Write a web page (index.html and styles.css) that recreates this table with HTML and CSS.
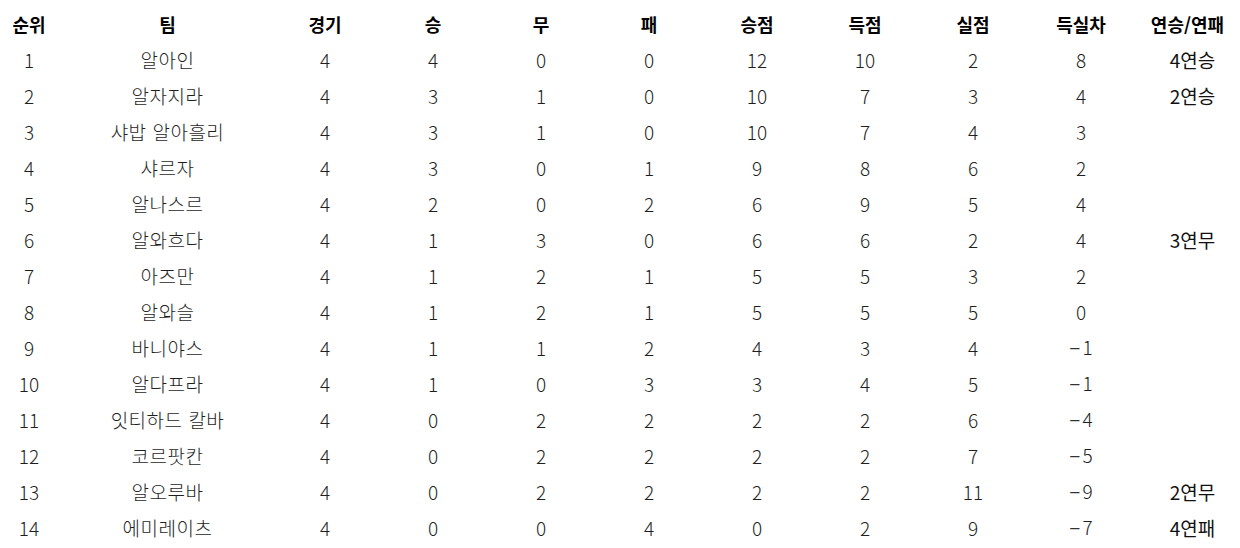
FILE: index.html
```html
<!DOCTYPE html>
<html lang="ko">
<head>
<meta charset="utf-8">
<title>순위표</title>
<link rel="stylesheet" href="styles.css">
</head>
<body>
<table class="standings">
  <colgroup>
    <col class="c-rank"><col class="c-team"><col class="c-num"><col class="c-num"><col class="c-num"><col class="c-num"><col class="c-num"><col class="c-num"><col class="c-num"><col class="c-num"><col class="c-streak">
  </colgroup>
  <thead>
    <tr><th>순위</th><th class="team">팀</th><th>경기</th><th>승</th><th>무</th><th>패</th><th>승점</th><th>득점</th><th>실점</th><th>득실차</th><th>연승/연패</th></tr>
  </thead>
  <tbody>
    <tr><td>1</td><td class="team">알아인</td><td>4</td><td>4</td><td>0</td><td>0</td><td>12</td><td>10</td><td>2</td><td>8</td><td class="streak">4연승</td></tr>
    <tr><td>2</td><td class="team">알자지라</td><td>4</td><td>3</td><td>1</td><td>0</td><td>10</td><td>7</td><td>3</td><td>4</td><td class="streak">2연승</td></tr>
    <tr><td>3</td><td class="team">샤밥 알아흘리</td><td>4</td><td>3</td><td>1</td><td>0</td><td>10</td><td>7</td><td>4</td><td>3</td><td class="streak"></td></tr>
    <tr><td>4</td><td class="team">샤르자</td><td>4</td><td>3</td><td>0</td><td>1</td><td>9</td><td>8</td><td>6</td><td>2</td><td class="streak"></td></tr>
    <tr><td>5</td><td class="team">알나스르</td><td>4</td><td>2</td><td>0</td><td>2</td><td>6</td><td>9</td><td>5</td><td>4</td><td class="streak"></td></tr>
    <tr><td>6</td><td class="team">알와흐다</td><td>4</td><td>1</td><td>3</td><td>0</td><td>6</td><td>6</td><td>2</td><td>4</td><td class="streak">3연무</td></tr>
    <tr><td>7</td><td class="team">아즈만</td><td>4</td><td>1</td><td>2</td><td>1</td><td>5</td><td>5</td><td>3</td><td>2</td><td class="streak"></td></tr>
    <tr><td>8</td><td class="team">알와슬</td><td>4</td><td>1</td><td>2</td><td>1</td><td>5</td><td>5</td><td>5</td><td>0</td><td class="streak"></td></tr>
    <tr><td>9</td><td class="team">바니야스</td><td>4</td><td>1</td><td>1</td><td>2</td><td>4</td><td>3</td><td>4</td><td><span class="minus">−</span>1</td><td class="streak"></td></tr>
    <tr><td>10</td><td class="team">알다프라</td><td>4</td><td>1</td><td>0</td><td>3</td><td>3</td><td>4</td><td>5</td><td><span class="minus">−</span>1</td><td class="streak"></td></tr>
    <tr><td>11</td><td class="team">잇티하드 칼바</td><td>4</td><td>0</td><td>2</td><td>2</td><td>2</td><td>2</td><td>6</td><td><span class="minus">−</span>4</td><td class="streak"></td></tr>
    <tr><td>12</td><td class="team">코르팟칸</td><td>4</td><td>0</td><td>2</td><td>2</td><td>2</td><td>2</td><td>7</td><td><span class="minus">−</span>5</td><td class="streak"></td></tr>
    <tr><td>13</td><td class="team">알오루바</td><td>4</td><td>0</td><td>2</td><td>2</td><td>2</td><td>2</td><td>11</td><td><span class="minus">−</span>9</td><td class="streak">2연무</td></tr>
    <tr><td>14</td><td class="team">에미레이츠</td><td>4</td><td>0</td><td>0</td><td>4</td><td>0</td><td>2</td><td>9</td><td><span class="minus">−</span>7</td><td class="streak">4연패</td></tr>
  </tbody>
</table>
</body>
</html>
```

FILE: styles.css
```css
html, body {
  margin: 0;
  padding: 0;
  background: #ffffff;
}

body {
  font-family: "Noto Sans CJK KR", "Noto Sans", "Liberation Sans", sans-serif;
  font-size: 18px;
  color: #222222;
}

.standings {
  width: 1240px;
  margin-top: 6px;
  border-collapse: collapse;
  table-layout: fixed;
}

.c-rank { width: 58px; }
.c-team { width: 213px; }
.c-num { width: 108px; }
.c-streak { width: 105px; }

.standings th,
.standings td {
  height: 36px;
  padding: 0;
  text-align: center;
  vertical-align: middle;
  line-height: 20px;
  white-space: nowrap;
}

.standings th {
  font-size: 18px;
  font-weight: 700;
  color: #000000;
}

.standings td {
  font-size: 19px;
  font-weight: 300;
  color: #1e1e1e;
}

.standings .team {
  padding-left: 6px;
}

.standings td.team {
  letter-spacing: 0.5px;
}

.standings td.streak {
  padding-left: 10px;
  font-weight: 400;
  color: #111111;
}

.minus {
  font-family: "Liberation Sans", sans-serif;
  font-weight: 400;
  margin-right: 2px;
  color: #333333;
}
```
